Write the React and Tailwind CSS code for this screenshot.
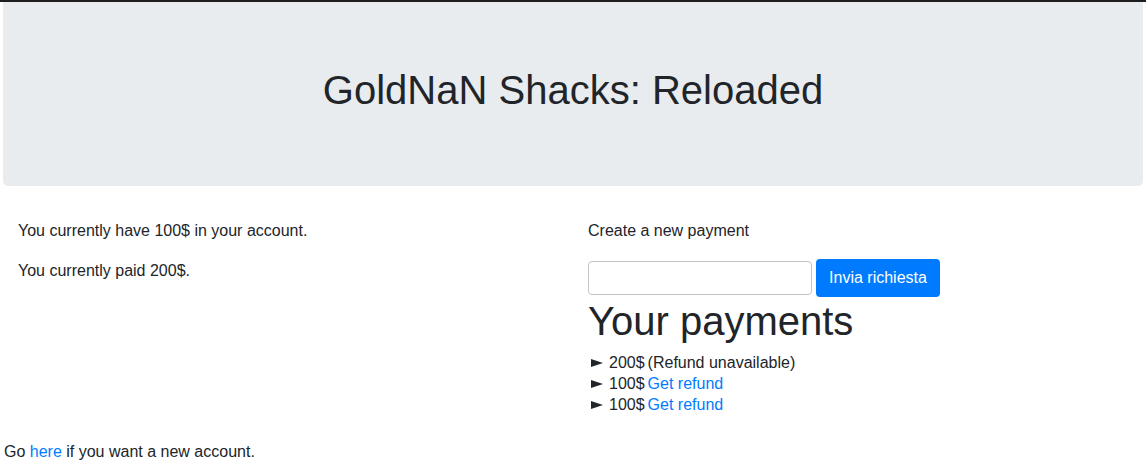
export default function App() {
  const payments = [
    { amount: "200$", refundable: false },
    { amount: "100$", refundable: true },
    { amount: "100$", refundable: true },
  ];

  return (
    <div className="min-h-screen bg-white text-[#212529] text-[16px] leading-6" style={{ fontFamily: '"Liberation Sans", Arial, sans-serif' }}>
      <div className="h-[2px] bg-[#1e1e1e]" />
      <div className="w-[1140px] mx-auto">
        {/* Jumbotron */}
        <div className="bg-[#e9ecef] rounded-b-[5px] py-16 px-8 mb-[33px]">
          <h1 className="text-[40px] leading-[48px] text-center mb-2">GoldNaN Shacks: Reloaded</h1>
        </div>

        <div className="grid grid-cols-2">
          <div className="px-[15px]">
            <p className="mb-4">You currently have 100$ in your account.</p>
            <p className="mb-4">You currently paid 200$.</p>
          </div>
          <div className="px-[15px]">
            <p className="mb-4">Create a new payment</p>
            <form className="flex items-center gap-1 h-[38px]" onSubmit={e => e.preventDefault()}>
              <input type="text" className="w-[224px] h-[34px] border border-[#c4c4c4] rounded-[4px] px-2 outline-none" />
              <button type="submit" className="w-[124px] h-[38px] bg-[#007bff] text-white rounded-[4px] px-3">
                Invia richiesta
              </button>
            </form>
            <h1 className="text-[40px] leading-[48px] mb-[7px]">Your payments</h1>
            <div className="mb-[25px]">
              {payments.map((p, i) => (
                <div key={i} className="leading-[21px] h-[21px] flex items-center">
                  <span className="w-[21px] pl-[3px] flex items-center">
                    <svg width="12" height="8" viewBox="0 0 12 8"><polygon points="0,0 12,4 0,8" fill="#212529" /></svg>
                  </span>
                  <span>{p.amount}</span>
                  {p.refundable ? (
                    <a href="#" className="text-[#007bff] ml-[3px]">Get refund</a>
                  ) : (
                    <span className="ml-[3px]">(Refund unavailable)</span>
                  )}
                </div>
              ))}
            </div>
          </div>
        </div>
      </div>
      <p className="pl-[4px]">
        Go <a href="#" className="text-[#007bff]">here</a> if you want a new account.
      </p>
    </div>
  );
}
